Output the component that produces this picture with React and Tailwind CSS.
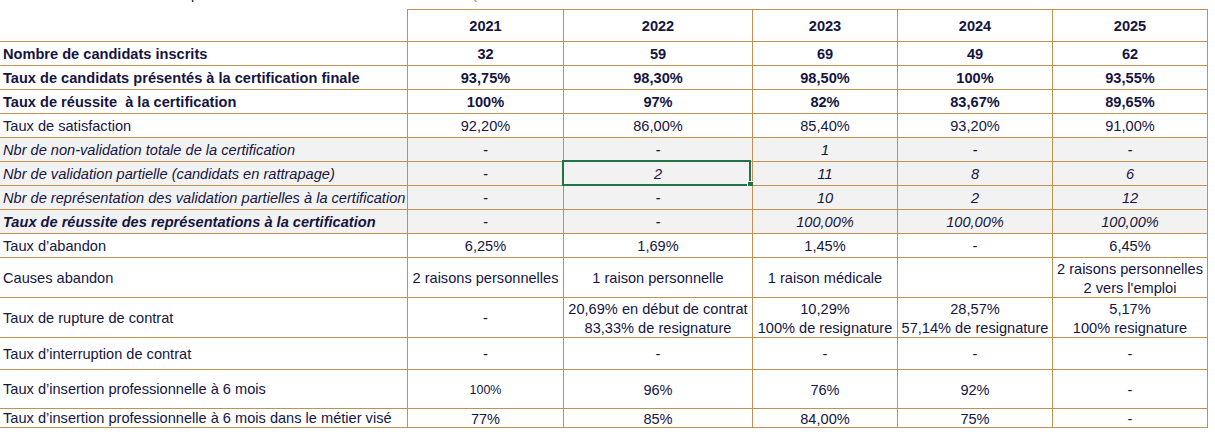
import React from 'react'

const years = ['2021', '2022', '2023', '2024', '2025']

const rows = [
	{ label: 'Nombre de candidats inscrits', values: ['32', '59', '69', '49', '62'], h: 'h-[24px]', kind: 'bold' },
	{ label: 'Taux de candidats présentés à la certification finale', values: ['93,75%', '98,30%', '98,50%', '100%', '93,55%'], h: 'h-[24px]', kind: 'bold' },
	{ label: 'Taux de réussite \u00a0à la certification', values: ['100%', '97%', '82%', '83,67%', '89,65%'], h: 'h-[24px]', kind: 'bold' },
	{ label: 'Taux de satisfaction', values: ['92,20%', '86,00%', '85,40%', '93,20%', '91,00%'], h: 'h-[24px]' },
	{ label: 'Nbr de non-validation totale de la certification', values: ['-', '-', '1', '-', '-'], h: 'h-[24px]', kind: 'italic', gray: true },
	{ label: 'Nbr de validation partielle (candidats en rattrapage)', values: ['-', '2', '11', '8', '6'], h: 'h-[24px]', kind: 'italic', gray: true, selected: 1 },
	{ label: 'Nbr de représentation des validation partielles à la certification', values: ['-', '-', '10', '2', '12'], h: 'h-[24px]', kind: 'italic', gray: true },
	{ label: 'Taux de réussite des représentations à la certification', values: ['-', '-', '100,00%', '100,00%', '100,00%'], h: 'h-[24px]', kind: 'boldlabel', gray: true },
	{ label: 'Taux d’abandon', values: ['6,25%', '1,69%', '1,45%', '-', '6,45%'], h: 'h-[24px]' },
	{ label: 'Causes abandon', values: ['2 raisons personnelles', '1 raison personnelle', '1 raison médicale', '', "2 raisons personnelles\n2 vers l'emploi"], h: 'h-[40px]' },
	{
		label: 'Taux de rupture de contrat',
		values: ['-', '20,69% en début de contrat\n83,33% de resignature', '10,29%\n100% de resignature', '28,57%\n57,14% de resignature', '5,17%\n100% resignature'],
		h: 'h-[40px]',
	},
	{ label: 'Taux d’interruption de contrat', values: ['-', '-', '-', '-', '-'], h: 'h-[32px]' },
	{ label: 'Taux d’insertion professionnelle à 6 mois', values: ['100%', '96%', '76%', '92%', '-'], h: 'h-[39px]', small: 0 },
	{ label: 'Taux d’insertion professionnelle à 6 mois dans le métier visé', values: ['77%', '85%', '84,00%', '75%', '-'], h: 'h-[19px]' },
]

const line = 'border-[#c1914f]'

export default function App() {
	return (
		<div className="w-[1215px] h-[435px] bg-white overflow-hidden font-['Liberation_Sans',Arial,sans-serif] text-[14.6px] text-[#15153f]">
			{/* title row, cut off above the window */}
			<div className="h-[9px] overflow-hidden">
				<div className="-mt-[14px] leading-[16px] flex whitespace-nowrap">
					<span className="ml-[191px]">p</span>
					<span className="ml-[273px] text-[#c0783a]">(</span>
				</div>
			</div>

			<div className="grid grid-cols-[408px_156px_189px_145px_155px_155px]">
				{/* header */}
				<div className={`h-[33px] border-r border-b ${line}`} />
				{years.map((y) => (
					<div
						key={y}
						className={`h-[33px] pt-[2px] flex items-center justify-center font-bold border-t border-r border-b ${line}`}>
						{y}
					</div>
				))}

				{rows.map((r, i) => {
					const bg = r.gray ? 'bg-[#f2f2f2]' : 'bg-white'
					const labelStyle =
						r.kind === 'bold'
							? 'font-bold'
							: r.kind === 'italic'
							? 'italic'
							: r.kind === 'boldlabel'
							? 'font-bold italic'
							: ''
					const valueStyle =
						r.kind === 'bold' ? 'font-bold' : r.kind === 'italic' || r.kind === 'boldlabel' ? 'italic' : ''
					return (
						<React.Fragment key={i}>
							<div
								className={`${r.h} ${bg} ${labelStyle} flex items-center pl-[3px] pt-[2px] whitespace-nowrap overflow-hidden border-r border-b ${line}`}>
								{r.label}
							</div>
							{r.values.map((v, j) => (
								<div
									key={j}
									className={`${r.h} ${bg} ${valueStyle} ${
										r.small === j ? 'text-[12.5px]' : ''
									} relative flex items-center justify-center text-center pt-[2px] whitespace-pre-line leading-[18.5px] border-r border-b ${line}`}>
									{v}
									{r.selected === j && (
										<>
											<div className="absolute -left-[2px] -top-[2px] right-[1px] -bottom-[1px] border-2 border-[#217346]" />
											<div className="absolute -right-[2px] -bottom-[3px] w-[6px] h-[6px] bg-[#217346] outline outline-1 outline-white" />
										</>
									)}
								</div>
							))}
						</React.Fragment>
					)
				})}
			</div>
		</div>
	)
}
